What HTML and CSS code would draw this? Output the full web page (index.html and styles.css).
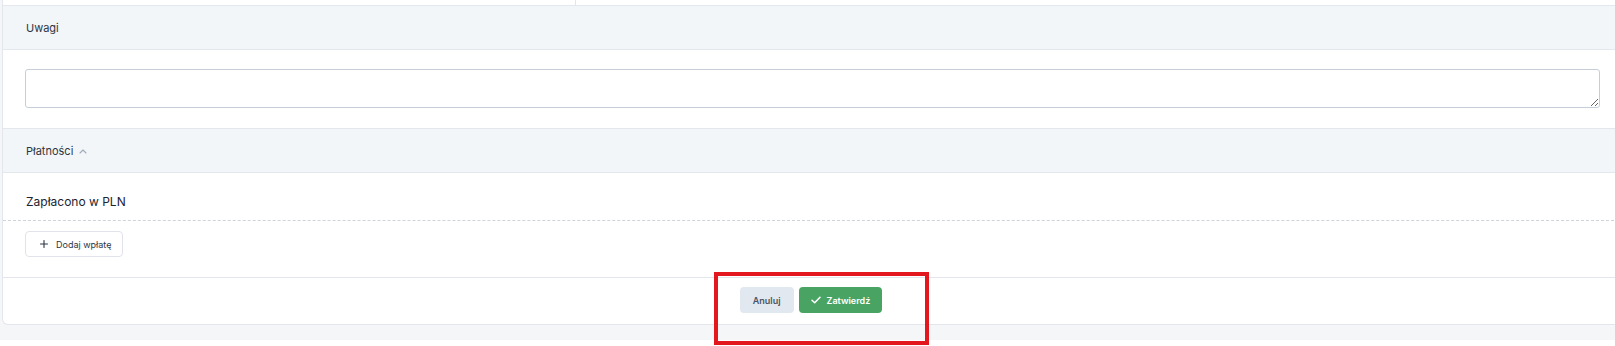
FILE: index.html
```html
<!DOCTYPE html>
<html lang="pl">
<head>
    <meta charset="UTF-8">
    <meta name="viewport" content="width=device-width, initial-scale=1.0">
    <title>Dokument</title>
    <link rel="stylesheet" href="styles.css">
</head>
<body>
    <div class="page">
        <div class="card">
            <div class="top-strip">
                <div class="top-col"></div>
                <div class="top-col"></div>
            </div>

            <div class="section-header">
                <span>Uwagi</span>
            </div>
            <div class="notes">
                <textarea class="notes-input"></textarea>
            </div>

            <div class="section-header">
                <span>Płatności</span>
                <svg class="chevron" width="8" height="5" viewBox="0 0 8 5">
                    <path d="M1 4 L4 1 L7 4" fill="none" stroke="#a0aab8" stroke-width="1.1" stroke-linecap="round" stroke-linejoin="round"/>
                </svg>
            </div>
            <div class="paid-row">
                <span>Zapłacono w PLN</span>
            </div>
            <div class="add-row">
                <button class="btn-outline">
                    <svg width="8" height="8" viewBox="0 0 8 8">
                        <path d="M4 0.5 V7.5 M0.5 4 H7.5" stroke="#2d3748" stroke-width="1.1" stroke-linecap="round"/>
                    </svg>
                    Dodaj wpłatę
                </button>
            </div>

            <div class="card-footer">
                <button class="btn-cancel">Anuluj</button>
                <button class="btn-confirm">
                    <svg width="10" height="8" viewBox="0 0 10 8">
                        <path d="M1 4.2 L3.7 6.8 L9 1.2" fill="none" stroke="#fff" stroke-width="1.5" stroke-linecap="round" stroke-linejoin="round"/>
                    </svg>
                    Zatwierdź
                </button>
            </div>
        </div>
    </div>
    <div class="highlight"></div>
</body>
</html>
```

FILE: styles.css
```css
body {
    margin: 0;
    background-color: #fff;
    font-family: Inter, 'Noto Sans', sans-serif;
    color: #1f2733;
    overflow: hidden;
}
.page {
    background-color: #f5f6f8;
    padding: 0 0 15px 2px;
    width: 1618px;
}
.card {
    background-color: #fff;
    border: 1px solid #e3e6ed;
    border-top: none;
    border-radius: 0 0 6px 6px;
    overflow: hidden;
}
.top-strip {
    display: grid;
    grid-template-columns: 573px 1fr;
    height: 5px;
}
.top-strip .top-col:first-child {
    border-right: 1px solid #e3e6ed;
}
.section-header {
    display: flex;
    align-items: center;
    gap: 6px;
    height: 43px;
    padding-left: 23px;
    background-color: #f3f6f9;
    border-top: 1px solid #e3e8ee;
    border-bottom: 1px solid #e3e8ee;
    font-size: 11px;
    color: #2d3542;
}
.section-header .chevron {
    margin-top: 1px;
}
.notes {
    padding: 19px 19px 20px 22px;
}
.notes-input {
    display: block;
    width: 100%;
    height: 39px;
    box-sizing: border-box;
    border: 1px solid #c6ced7;
    border-radius: 3px;
    resize: vertical;
    font-family: inherit;
}
.paid-row {
    display: flex;
    align-items: center;
    height: 48px;
    padding-left: 23px;
    padding-top: 10px;
    box-sizing: border-box;
    border-bottom: 1px dashed #cdd4dc;
    font-size: 12px;
    color: #1c2430;
}
.add-row {
    padding: 10px 22px 20px;
    border-bottom: 1px solid #e3e6ed;
}
.btn-outline {
    display: flex;
    align-items: center;
    gap: 8px;
    height: 26px;
    padding: 0 11px 0 14px;
    background: #fff;
    border: 1px solid #e0e3ea;
    border-radius: 4px;
    font-family: inherit;
    font-size: 9px;
    color: #2d3748;
}
.card-footer {
    display: flex;
    justify-content: center;
    gap: 5px;
    padding: 9px 0 11px;
}
.card-footer button {
    display: flex;
    align-items: center;
    height: 26px;
    border: none;
    border-radius: 4px;
    font-family: inherit;
    font-size: 9px;
    font-weight: 600;
}
.btn-cancel {
    padding: 0 13px;
    background-color: #e2e8ef;
    color: #4a5568;
}
.btn-confirm {
    gap: 6px;
    padding: 0 12px;
    background-color: #49a463;
    color: #fff;
}
.highlight {
    position: absolute;
    left: 714px;
    top: 272px;
    width: 215px;
    height: 73px;
    box-sizing: border-box;
    border: 4px solid #e3181f;
}
```
